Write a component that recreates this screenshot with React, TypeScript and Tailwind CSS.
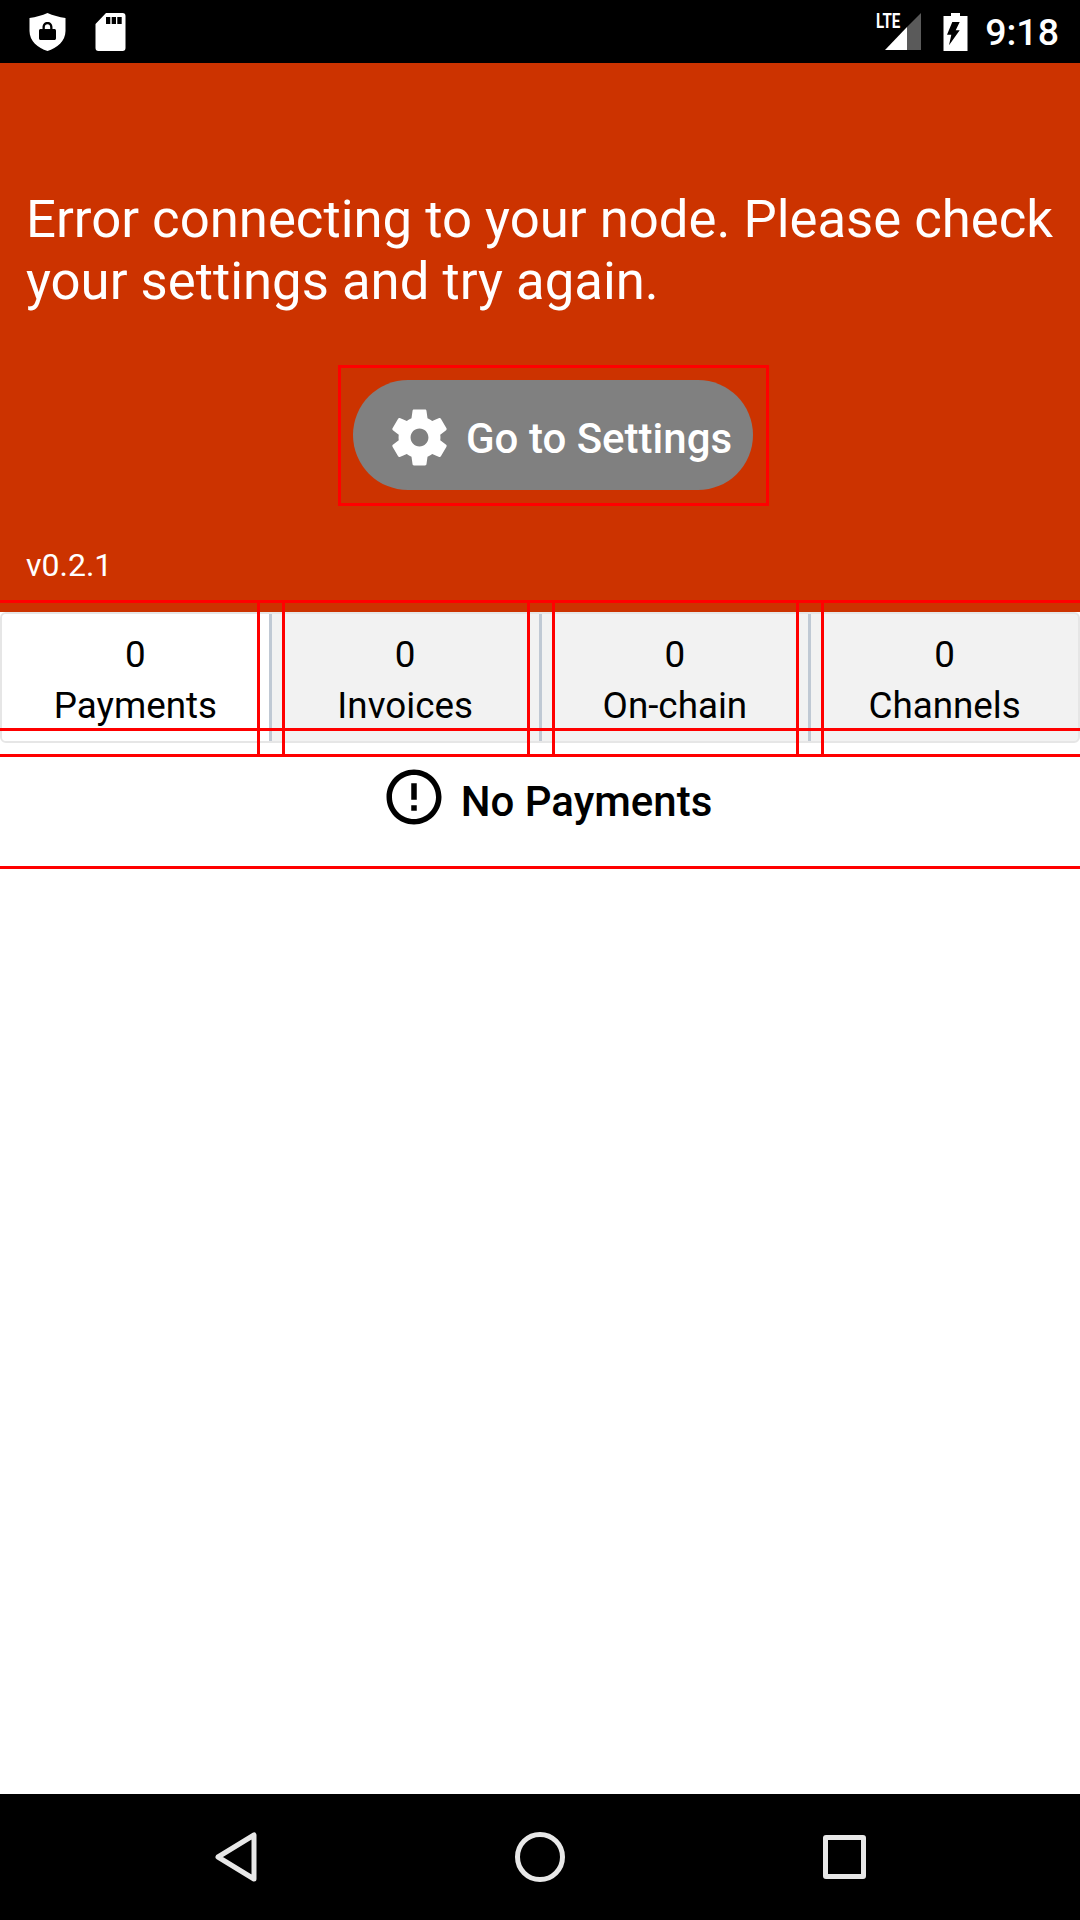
import { MdErrorOutline } from 'react-icons/md';

const tabs = [
  { label: 'Payments', active: true },
  { label: 'Invoices', active: false },
  { label: 'On-chain', active: false },
  { label: 'Channels', active: false },
];

// red debug outlines sitting on top of the screenshot
function Outlines() {
  return (
    <div className="absolute inset-0 pointer-events-none">
      <div className="absolute left-[338px] top-[365px] w-[431px] h-[141px] border-[3px] border-[#ff0000]" />
      <div className="absolute left-0 right-0 top-[600px] h-[3px] bg-[#ff0000]" />
      <div className="absolute left-0 right-0 top-[728px] h-[3px] bg-[#ff0000]" />
      <div className="absolute left-0 right-0 top-[754px] h-[3px] bg-[#ff0000]" />
      <div className="absolute left-0 right-0 top-[866px] h-[3px] bg-[#ff0000]" />
      <div className="absolute left-[257px] top-[600px] w-[3px] h-[157px] bg-[#ff0000]" />
      <div className="absolute left-[282px] top-[600px] w-[3px] h-[157px] bg-[#ff0000]" />
      <div className="absolute left-[527px] top-[600px] w-[3px] h-[157px] bg-[#ff0000]" />
      <div className="absolute left-[552px] top-[600px] w-[3px] h-[157px] bg-[#ff0000]" />
      <div className="absolute left-[796px] top-[600px] w-[3px] h-[157px] bg-[#ff0000]" />
      <div className="absolute left-[821px] top-[600px] w-[3px] h-[157px] bg-[#ff0000]" />
    </div>
  );
}

function StatusBar() {
  return (
    <div className="h-[63px] bg-black flex items-center pl-[29px] pr-[23px] text-white">
      <svg width="37" height="38" viewBox="0 0 37 38" fill="white">
        <path d="M18.5 0 C24 2.5 30 4 36.5 5 V18 C36.5 28 28 35 18.5 38 C9 35 0.5 28 0.5 18 V5 C7 4 13 2.5 18.5 0 Z" />
        <path
          d="M12 16 H13.5 V14.5 C13.5 11 15.5 9 18.5 9 C21.5 9 23.5 11 23.5 14.5 V16 H25 C26.5 16 27 16.5 27 18 V25 C27 26.5 26.5 27 25 27 H12 C10.5 27 10 26.5 10 25 V18 C10 16.5 10.5 16 12 16 Z M15.8 16 H21.2 V14.5 C21.2 12.5 20.2 11.3 18.5 11.3 C16.8 11.3 15.8 12.5 15.8 14.5 Z"
          fill="black"
          fillRule="evenodd"
        />
      </svg>
      <svg className="ml-[29px]" width="31" height="38" viewBox="0 0 31 38" fill="white">
        <path
          d="M11 0 H27.5 C29.5 0 30.5 1 30.5 3 V35 C30.5 37 29.5 38 27.5 38 H3.5 C1.5 38 0.5 37 0.5 35 V11 Z M11 4 V11 H15.3 V4 Z M16.7 4 V11 H21 V4 Z M22.3 4 V11 H26.7 V4 Z"
          fillRule="evenodd"
        />
      </svg>
      <div className="ml-auto flex items-center">
        <div className="relative w-[36px] h-[37px] mr-[22px]">
          <svg className="absolute left-0 top-0" width="36" height="37" viewBox="0 0 36 37">
            <path d="M22 14 L36 0 V37 H22 Z" fill="#5a5a5a" />
            <path d="M0 37 L22 14 V37 Z" fill="white" />
          </svg>
          <span className="absolute left-[-9px] top-[-2px] text-[21px] leading-[20px] font-bold scale-x-[0.72] origin-left font-['Roboto',sans-serif]">
            LTE
          </span>
        </div>
        <svg width="25" height="38" viewBox="0 0 25 38">
          <path
            d="M8 0 H17 V3 H24.5 V38 H0.5 V3 H8 Z M9.3 9 L4 21.7 H8.3 L6 32.3 L16.7 17.3 H12.7 L16.7 9 Z"
            fill="white"
            fillRule="evenodd"
          />
        </svg>
        <span className="ml-[17px] mr-[-2px] text-[37.5px] leading-[44px] font-medium font-['Roboto',sans-serif]">9:18</span>
      </div>
    </div>
  );
}

function NavBar() {
  return (
    <div className="h-[126px] bg-black flex items-start pt-[38px] pl-[215px] text-[#e8e8e8]">
      <svg width="42" height="50" viewBox="0 0 42 50" fill="none" stroke="currentColor" strokeWidth="5" strokeLinejoin="round">
        <path d="M39 3 V47 L3 25 Z" />
      </svg>
      <div className="ml-[258px] w-[50px] h-[50px] rounded-full border-[5px] border-[#e8e8e8]" />
      <div className="ml-[258px] mt-[3px] w-[43px] h-[44px] rounded-[3px] border-[5px] border-[#e8e8e8]" />
    </div>
  );
}

function GearIcon() {
  return (
    <svg width="67" height="67" viewBox="0 0 24 24" fill="white" className="shrink-0">
      <path
        fillRule="evenodd"
        d="M19.43 12.98c.04-.32.07-.64.07-.98s-.03-.66-.07-.98l2.11-1.65c.19-.15.24-.42.12-.64l-2-3.46c-.12-.22-.39-.3-.61-.22l-2.49 1c-.52-.4-1.08-.73-1.69-.98l-.38-2.65C14.46 2.18 14.25 2 14 2h-4c-.25 0-.46.18-.49.42l-.38 2.65c-.61.25-1.17.59-1.69.98l-2.49-1c-.23-.09-.49 0-.61.22l-2 3.46c-.13.22-.07.49.12.64l2.11 1.65c-.04.32-.07.65-.07.98s.03.66.07.98l-2.11 1.65c-.19.15-.24.42-.12.64l2 3.46c.12.22.39.3.61.22l2.49-1c.52.4 1.08.73 1.69.98l.38 2.65c.03.24.24.42.49.42h4c.25 0 .46-.18.49-.42l.38-2.65c.61-.25 1.17-.59 1.69-.98l2.49 1c.23.09.49 0 .61-.22l2-3.46c.12-.22.07-.49-.12-.64l-2.11-1.65zM12 15.2c-1.77 0-3.2-1.43-3.2-3.2s1.43-3.2 3.2-3.2 3.2 1.43 3.2 3.2-1.43 3.2-3.2 3.2z"
      />
    </svg>
  );
}

export default function App() {
  return (
    <div className="relative w-[1080px] h-[1920px] flex flex-col bg-white font-['Roboto',sans-serif]">
      <StatusBar />

      <div className="h-[549px] bg-[#cc3300] text-white flex flex-col px-[26px]">
        <p className="mt-[125px] text-[52.7px] leading-[62px]">
          Error connecting to your node. Please check your settings and try again.
        </p>
        <div className="mt-[68px] flex justify-center">
          <button className="ml-[26px] w-[400px] h-[110px] rounded-full bg-[#808080] flex items-center pl-[33px] pt-[4px] text-[42px] font-medium">
            <GearIcon />
            <span className="ml-[13px] mt-[3px]">Go to Settings</span>
          </button>
        </div>
        <p className="mt-[57px] text-[32px] leading-[36px]">v0.2.1</p>
      </div>

      <div className="flex h-[131px] border-2 border-[#e6e6e6] rounded-[6px] overflow-hidden bg-[#f2f2f2]">
        {tabs.map((tab, i) => (
          <div
            key={tab.label}
            className={`flex-1 flex flex-col items-center text-black text-[36.8px] leading-[51px] pt-[15px] ${
              tab.active ? 'bg-white' : ''
            } ${i < 3 ? 'border-r-[3px] border-[#c0c9d4]' : ''}`}
          >
            <span>0</span>
            <span>{tab.label}</span>
          </div>
        ))}
      </div>

      <div className="mt-[21px] h-[116px] pl-[13px] flex items-start justify-center text-black">
        <MdErrorOutline size={66} />
        <span className="ml-[14px] mt-[5px] text-[42px] leading-[66px] font-medium">No Payments</span>
      </div>

      <div className="flex-1" />
      <NavBar />
      <Outlines />
    </div>
  );
}
